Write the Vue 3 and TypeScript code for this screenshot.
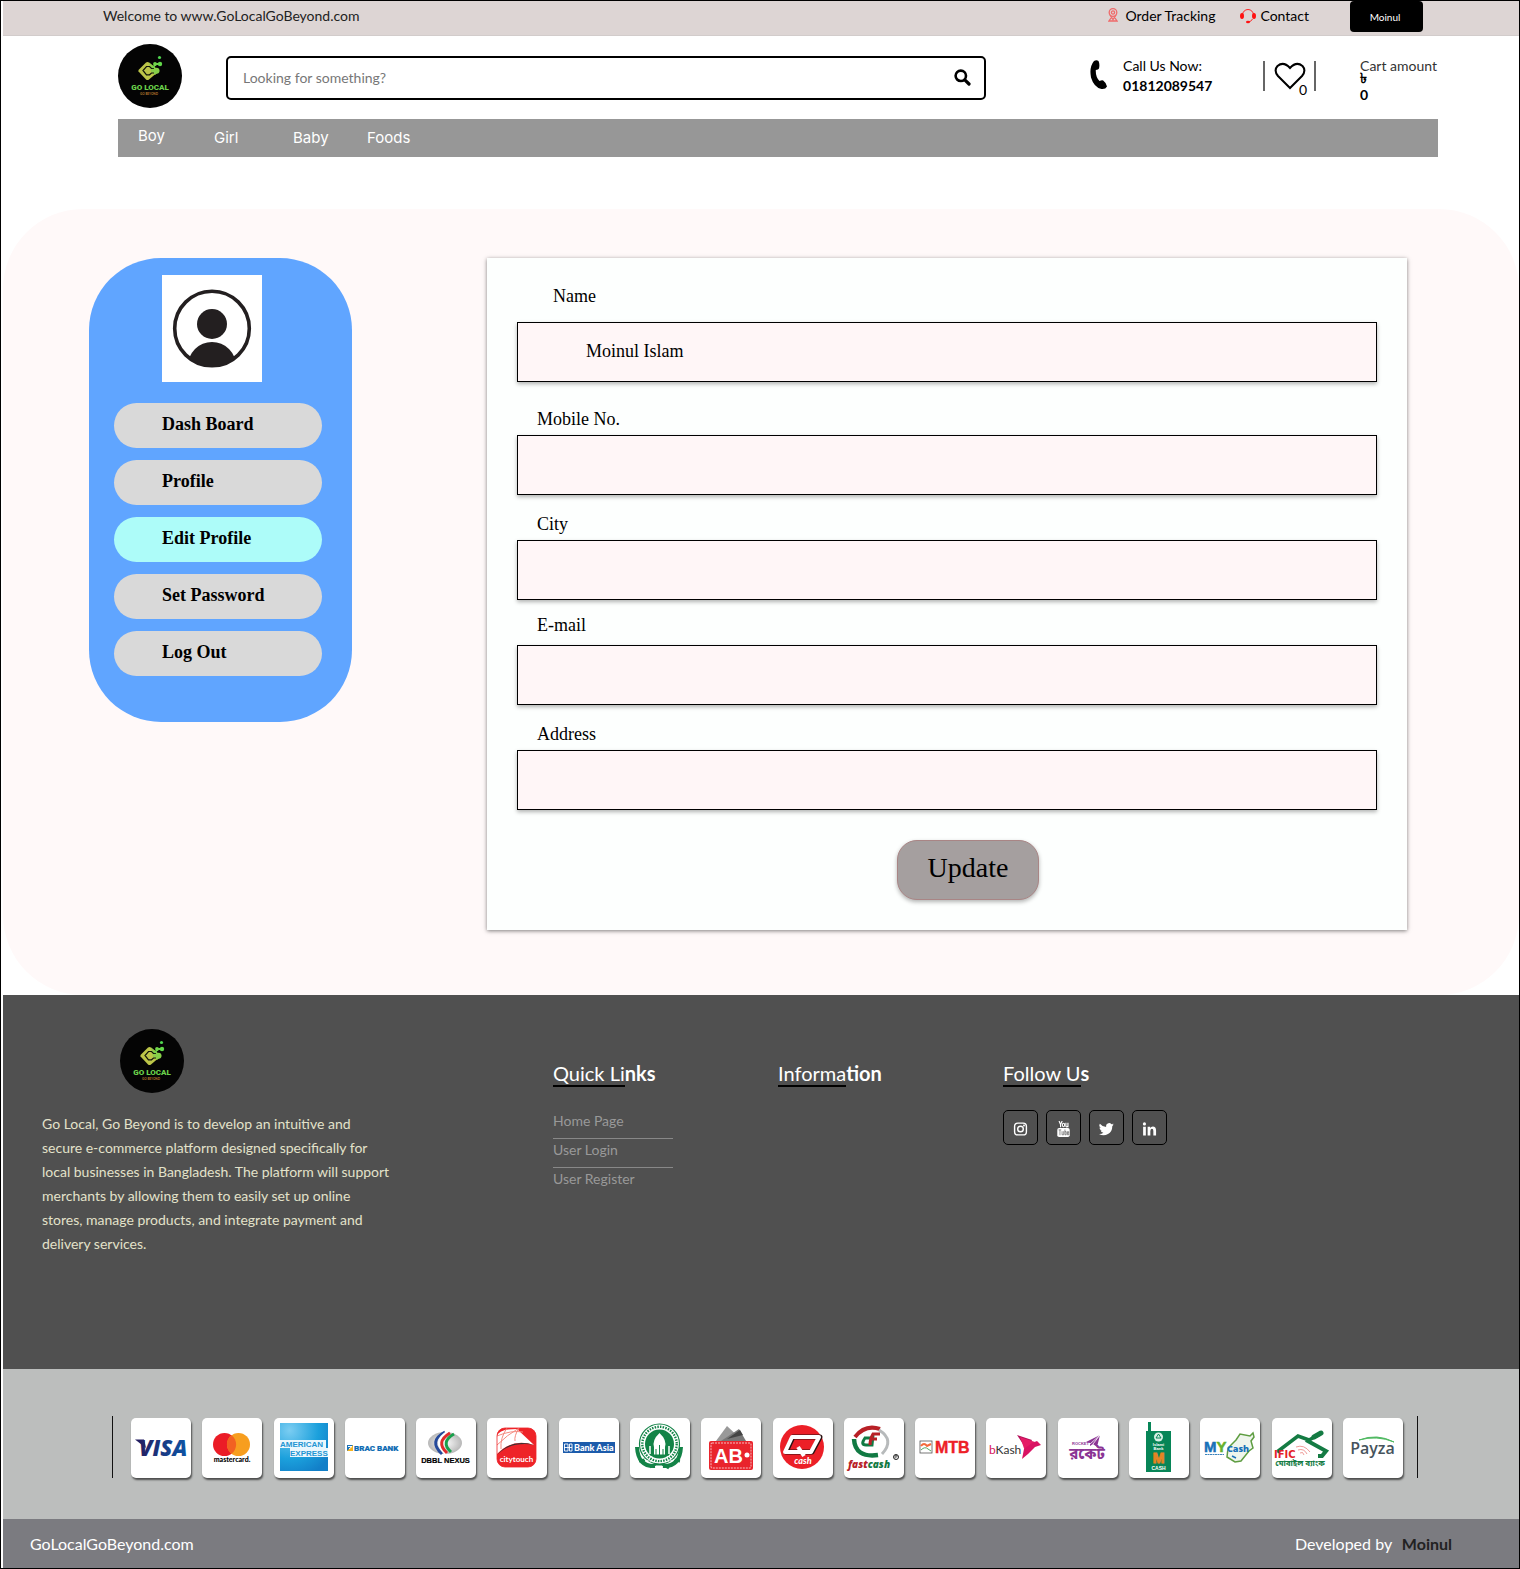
<script setup lang="ts">
import { reactive } from 'vue'

interface Field {
  id: string
  label: string
  type: string
  variant?: string
}

const categories: string[] = ['Boy', 'Girl', 'Baby', 'Foods']
const menu: string[] = ['Dash Board', 'Profile', 'Edit Profile', 'Set Password', 'Log Out']
const active = 'Edit Profile'

const fields: Field[] = [
  { id: 'name', label: 'Name', type: 'text', variant: 'lead' },
  { id: 'mobile', label: 'Mobile No.', type: 'tel' },
  { id: 'city', label: 'City', type: 'text' },
  { id: 'email', label: 'E-mail', type: 'email', variant: 'raised' },
  { id: 'address', label: 'Address', type: 'text' },
]

const values = reactive<Record<string, string>>({
  name: 'Moinul Islam',
  mobile: '',
  city: '',
  email: '',
  address: '',
})

const quickLinks: string[] = ['Home Page', 'User Login', 'User Register']
</script>

<template>
  <div class="page">
    <svg class="defs" width="0" height="0" aria-hidden="true">
      <defs>
        <linearGradient id="leaf" x1="0" y1="1" x2="1" y2="0">
          <stop offset="0" stop-color="#dcb83e" />
          <stop offset="1" stop-color="#62d84a" />
        </linearGradient>
        <symbol id="brand" viewBox="0 0 64 64">
          <circle cx="32" cy="32" r="32" fill="#040404" />
          <path d="M20.500 27.500 Q20 26.500 21 25.500 L28 18.500 Q29.500 17.500 31 18.500 L34 21 L41 27 L31 35.500 Q29.500 36.500 28 35.500 Z" fill="#bcc548" />
          <path d="M31 18.500 L41.500 27 L37 31 L33 28Z" fill="#8fcb49" />
          <path d="M36 24.500 L33.500 24.500 L31.500 22.500 H28.500 L25 26.500 L28.500 30.800 H31.500 L33.500 29 H36" fill="none" stroke="#10140a" stroke-width="1.200" />
          <circle cx="38.500" cy="26.800" r="3" fill="#86cf48" />
          <path d="M34.500 24 L38 20 H42" fill="none" stroke="#70d549" stroke-width="1.800" />
          <circle cx="37" cy="20" r="1.900" fill="#70d549" />
          <circle cx="42" cy="20" r="2.200" fill="#62d84a" />
          <circle cx="41.500" cy="13.500" r="1.600" fill="#4fd64f" />
          <text x="32" y="46" text-anchor="middle" font-family="Roboto, sans-serif" font-weight="900" font-size="8" fill="#6ad24b">GO LOCAL</text>
          <text x="31" y="51" text-anchor="middle" font-family="Lato, sans-serif" font-weight="700" font-size="3" fill="#b97a2c">GO BEYOND</text>
        </symbol>
      </defs>
    </svg>

    <div class="topbar">
      <span class="welcome">Welcome to www.GoLocalGoBeyond.com</span>
      <a href="#" class="toplink tracking">
        <svg width="10" height="14" viewBox="0 0 10 14" fill="none" stroke="#ef6a6a" stroke-width="1.300">
          <circle cx="5" cy="4.500" r="3.800" /><circle cx="5" cy="4.500" r="1.600" />
          <path d="M2 7 L5 11.500 L8 7 M3 10 L1 13 H9 L7 10" />
        </svg>
        Order Tracking
      </a>
      <a href="#" class="toplink contact">
        <svg width="16" height="16" viewBox="0 0 16 16">
          <path d="M2.500 7 A5.500 5.500 0 0 1 13.500 7 M12.500 11 Q11 14 8 14" fill="none" stroke="#f22" />
          <ellipse cx="2" cy="8" rx="2" ry="3" fill="#f11" /><ellipse cx="14" cy="8" rx="2" ry="3" fill="#f11" />
          <ellipse cx="8" cy="14" rx="2" ry="1.200" fill="#f11" />
        </svg>
        Contact
      </a>
      <button type="button" class="account">Moinul</button>
    </div>

    <header class="header">
      <a href="#" class="logo" aria-label="Go Local home"><svg width="64" height="64"><use href="#brand" /></svg></a>
      <form class="search" role="search" @submit.prevent>
        <input type="search" aria-label="Search" placeholder="Looking for something?" />
        <button type="submit" aria-label="Search">
          <svg width="17" height="17" viewBox="0 0 17 17" fill="none" stroke="#000">
            <circle cx="6.800" cy="6.800" r="5.200" stroke-width="2.600" />
            <path d="M10.800 10.800 L15 15" stroke-width="3.200" stroke-linecap="round" />
          </svg>
        </button>
      </form>
      <div class="call">
        <svg width="18" height="30" viewBox="0 0 18 30">
          <path d="M4 1 Q6.500 -0.500 8.500 1 Q10 4 9 8.500 Q8.500 9.500 5.800 10 Q5.500 17 9.500 21 Q12 19.800 13.200 20.500 Q16.500 23 17 26.500 Q15.500 29.500 11.500 29 Q4 27.500 1 17.500 Q-1 7 4 1Z" />
        </svg>
        <p>Call Us Now:<br /><strong>01812089547</strong></p>
      </div>
      <a href="#" class="wish" aria-label="Wishlist">
        <svg width="32" height="28" viewBox="0 0 32 28" fill="none" stroke="#000" stroke-width="2">
          <path d="M16 26 L4 14 Q-0.500 8.500 3.500 4 Q9.500 -1 16 6 Q22.500 -1 28.500 4 Q32.500 8.500 28 14Z" />
        </svg>
        <span class="count">0</span>
      </a>
      <div class="cart">
        <span class="cart-label">Cart amount</span>
        <strong>৳</strong>
        <strong>0</strong>
      </div>
    </header>

    <nav class="categories" aria-label="Categories">
      <a v-for="item in categories" :key="item" href="#" :class="item.toLowerCase()">{{ item }}</a>
    </nav>

    <main class="main">
      <aside class="sidebar">
        <svg class="avatar" viewBox="0 0 100 107" role="img" aria-label="User avatar">
          <rect width="100" height="107" fill="#fff" />
          <clipPath id="disc"><circle cx="50" cy="53.500" r="38" /></clipPath>
          <circle cx="50" cy="53.500" r="37.300" fill="none" stroke="#231f20" stroke-width="3.600" />
          <circle cx="50" cy="49" r="15" fill="#231f20" />
          <ellipse cx="50" cy="91" rx="24" ry="24" fill="#231f20" clip-path="url(#disc)" />
        </svg>
        <nav class="menu" aria-label="Account">
          <a v-for="item in menu" :key="item" href="#" :class="{ active: item === active }">{{ item }}</a>
        </nav>
      </aside>

      <form class="card" @submit.prevent>
        <div v-for="field in fields" :key="field.id" class="field" :class="field.variant">
          <label :for="field.id">{{ field.label }}</label>
          <input :id="field.id" v-model="values[field.id]" :type="field.type" />
        </div>
        <button type="submit" class="update">Update</button>
      </form>
    </main>

    <footer>
      <div class="info">
        <div class="about">
          <svg width="64" height="64"><use href="#brand" /></svg>
          <p>Go Local, Go Beyond is to develop an intuitive and secure e-commerce platform designed specifically for local businesses in Bangladesh. The platform will support merchants by allowing them to easily set up online stores, manage products, and integrate payment and delivery services.</p>
        </div>
        <section class="column">
          <h2><span>Quick Li</span>nks</h2>
          <ul class="links">
            <li v-for="link in quickLinks" :key="link"><a href="#">{{ link }}</a></li>
          </ul>
        </section>
        <section class="column">
          <h2><span>Informa</span>tion</h2>
        </section>
        <section class="column">
          <h2><span>Follow U</span>s</h2>
          <div class="social">
            <a href="#" aria-label="Instagram">
              <svg viewBox="0 0 16 16" fill="none" stroke="#fff" stroke-width="1.500"><rect x="1.700" y="1.700" width="12.600" height="12.600" rx="3.500" /><circle cx="8" cy="8" r="3" /><circle cx="11.700" cy="4.300" r=".4" /></svg>
            </a>
            <a href="#" aria-label="YouTube">
              <svg viewBox="0 0 16 18" fill="#fff">
                <path d="M3 0 L4.700 4 V7 M6.500 0 L4.700 4" fill="none" stroke="#fff" stroke-width="1.300" />
                <ellipse cx="8" cy="4.500" rx="1.300" ry="2" fill="none" stroke="#fff" stroke-width="1.200" />
                <path d="M10.700 2 V6 Q11.500 7 13 6 M13 2 V7" fill="none" stroke="#fff" stroke-width="1.300" />
                <rect x="1" y="8" width="14" height="10" rx="2" />
                <path d="M2.500 10 H5.500 M4 10 V16 M6.400 11.500 V15.500 H8.200 V11.500 M9.600 9.500 V15.500 H11 V12 H9.600 M13.800 14 V15.500 H12.400 V12 H13.800 V13.600 H12.400" fill="none" stroke="#505050" stroke-width=".7" />
              </svg>
            </a>
            <a href="#" aria-label="Twitter">
              <svg viewBox="0 0 24 24" fill="#fff"><path d="M23.600 4.900a9.600 9.600 0 0 1-2.800.8 4.900 4.900 0 0 0 2.200-2.700 9.800 9.800 0 0 1-3.100 1.200 4.900 4.900 0 0 0-8.400 4.500A14 14 0 0 1 1.400 3.500a4.900 4.900 0 0 0 1.500 6.600 4.900 4.900 0 0 1-2.200-.6 4.900 4.900 0 0 0 3.900 4.900 4.900 4.900 0 0 1-2.200.1 4.900 4.900 0 0 0 4.600 3.400A9.900 9.900 0 0 1 0 19.900a13.900 13.900 0 0 0 21.200-12.500 10 10 0 0 0 2.400-2.500Z" /></svg>
            </a>
            <a href="#" aria-label="LinkedIn">
              <svg viewBox="0 0 16 16" fill="#fff"><circle cx="2.600" cy="2.600" r="1.700" /><path d="M1.200 5.500h2.900V15H1.200ZM6 5.500h2.700v1.300Q9.600 5.200 11.500 5.200q3.500 0 3.500 4.300V15h-2.900v-5q0-2.300-1.500-2.300T8.900 10v5H6Z" /></svg>
            </a>
          </div>
        </section>
      </div>

      <div class="payments">
        <ul>
          <li><svg viewBox="0 0 60 60" role="img" aria-label="Visa">
            <linearGradient id="visa"><stop offset="0" stop-color="#241f62" /><stop offset="1" stop-color="#0d55a6" /></linearGradient>
            <path d="M4 21.500 H13 L15 30Z" fill="#241f62" />
            <text x="8" y="37.500" font-family="Open Sans, sans-serif" font-weight="800" font-style="italic" font-size="22" fill="url(#visa)">VISA</text>
          </svg></li>
          <li><svg viewBox="0 0 60 60" role="img" aria-label="Mastercard">
            <circle cx="22.500" cy="26.500" r="11.500" fill="#eb1c26" /><circle cx="36.500" cy="26.500" r="11.500" fill="#f79e1f" />
            <path d="M29.500 17.300 A11.500 11.500 0 0 1 29.500 35.700 A11.500 11.500 0 0 1 29.500 17.300" fill="#f26122" />
            <text x="30" y="44" text-anchor="middle" font-family="Lato, sans-serif" font-weight="900" font-size="7">mastercard.</text>
          </svg></li>
          <li><svg viewBox="0 0 60 60" role="img" aria-label="American Express">
            <radialGradient id="amex" cx=".2" cy=".15" r="1"><stop offset="0" stop-color="#7bcdf2" /><stop offset=".6" stop-color="#1ba0dc" /><stop offset="1" stop-color="#127fc8" /></radialGradient>
            <rect x="6" y="5" width="48" height="48" fill="url(#amex)" />
            <path d="M6 22 H52 V30 H54 V39 H16 V30 H6Z" fill="#eaf7fd" />
            <g font-family="Liberation Sans, sans-serif" font-weight="700" font-size="8" fill="#2295d3"><text x="6" y="29">AMERICAN</text><text x="16" y="38">EXPRESS</text></g>
          </svg></li>
          <li><svg viewBox="0 0 60 60" role="img" aria-label="BRAC Bank">
            <rect x="2" y="27" width="6" height="6" fill="#f8b41b" /><path d="M2 27 H8 L2 33Z" fill="#1a72b8" /><path d="M3 28.500 L7 28.500 L4 31" stroke="#fff" fill="none" />
            <text x="9" y="32.500" font-family="Roboto, sans-serif" font-weight="900" font-size="8" fill="#0d6bb3" stroke="#0d6bb3" stroke-width=".2">BRAC BANK</text>
          </svg></li>
          <li><svg viewBox="0 0 60 60" role="img" aria-label="DBBL Nexus">
            <radialGradient id="globe"><stop offset="0" stop-color="#fff" /><stop offset="1" stop-color="#b8b8b8" /></radialGradient>
            <ellipse cx="29" cy="25" rx="17" ry="11" fill="url(#globe)" />
            <g fill="none" stroke-width="3"><path d="M29 14 Q12 23 26 36" stroke="#254a9b" /><path d="M32 14 Q16 23 30 36" stroke="#fff" /><path d="M34 15 Q19 24 31 35" stroke="#e02b2b" /><path d="M38 16 Q24 24 35 34" stroke="#18a04b" /></g>
            <text x="29.500" y="45" text-anchor="middle" font-family="Liberation Sans, sans-serif" font-weight="700" font-size="7.500" stroke="#000" stroke-width=".2">DBBL NEXUS</text>
          </svg></li>
          <li><svg viewBox="0 0 60 60" role="img" aria-label="citytouch">
            <clipPath id="tile"><rect x="10" y="10" width="39" height="39" rx="8" /></clipPath>
            <g clip-path="url(#tile)"><rect x="10" y="10" width="39" height="39" fill="#ee2328" /><path d="M10 36 V18 Q12 11 30 11 L47 27 Q25 20 10 36Z" fill="#fff" /><path d="M10 37 Q24 20 48 27 Q23 23 10 37" fill="#333" /><path d="M10 18 Q24 12 36 14 M10 27 Q20 17 32 10 M20 10 Q13 20 14 31 M32 10 Q27 18 28 23" fill="none" stroke="#f48b80" /></g>
            <rect x="10" y="10" width="39" height="39" rx="8" fill="none" stroke="#ee2328" stroke-width=".8" />
            <text x="29.500" y="44" text-anchor="middle" font-family="Lato, sans-serif" font-weight="700" font-size="8" fill="#fff">citytouch</text>
          </svg></li>
          <li><svg viewBox="0 0 60 60" role="img" aria-label="Bank Asia">
            <rect x="4" y="24" width="52" height="11" fill="#1c5bab" /><path d="M5.500 26 H9 V33 H5.500Z M5 29.500 H13 M10.500 26 H13 V33 H10.500Z" fill="none" stroke="#fff" stroke-width=".9" />
            <text x="15" y="33" font-family="Lato, sans-serif" font-weight="900" font-size="9" fill="#fff">Bank Asia</text>
          </svg></li>
          <li><svg viewBox="0 0 60 60" role="img" aria-label="Islami Bank">
            <g fill="none" stroke="#138347"><path d="M7 29 Q8 49 25 48 M51 29 Q50 49 33 48" stroke-width="4" /><path d="M9 43 L15 42 M44 42 L50 43 M20 49 L26 46 L32 46 L39 50" stroke-width="3" /><circle cx="29.500" cy="26" r="20" fill="#fff" stroke-width="1.200" /><circle cx="29.500" cy="26" r="17.200" stroke-dasharray="1.500 1.200" stroke-width="2.400" /></g>
            <circle cx="29.500" cy="26" r="14.500" fill="#138347" />
            <path d="M24 29 Q22 22 29.500 15 Q37 22 35 29 V37 H24Z" fill="#fff" /><path d="M26 37 V31 M29.500 37 V27 M33 37 V31 M20 37 H39" stroke="#138347" /><path d="M20 36 V28 M39 36 V28" stroke="#fff" stroke-width="1.500" />
            <path d="M14 41 Q29 48 45 41" fill="none" stroke="#fff" stroke-width="1" stroke-dasharray="2 1" />
          </svg></li>
          <li><svg viewBox="0 0 60 60" role="img" aria-label="AB Bank wallet">
            <path d="M15 23 L26 8 L42 23Z" fill="#999" /><path d="M20 23 L38 11 L45 23Z" fill="#777" /><path d="M26 21 L39 12 L42 17Z" fill="#444" />
            <rect x="8" y="23" width="44" height="29" rx="2" fill="#e9242c" /><rect x="10" y="25" width="40" height="25" rx="1" fill="none" stroke="#fff" stroke-width=".7" stroke-dasharray="2 1" />
            <text x="13" y="45" font-family="Liberation Sans, sans-serif" font-weight="700" font-size="20" fill="#fff">AB</text><circle cx="46" cy="37" r="2.500" fill="#fff" />
          </svg></li>
          <li><svg viewBox="0 0 60 60" role="img" aria-label="Q Cash">
            <circle cx="29" cy="29" r="22" fill="#ec1f27" /><path d="M20 19 H47 L39 34 H13Z" fill="none" stroke="#2a1111" stroke-width="5" stroke-linejoin="round" /><path d="M19 19 H46 L38 34 H12Z" fill="none" stroke="#fff" stroke-width="4" stroke-linejoin="round" /><path d="M25 29 L31 38" stroke="#fff" stroke-width="4" />
            <text x="30" y="46" text-anchor="middle" font-family="Lato, sans-serif" font-weight="900" font-style="italic" font-size="9" fill="#fff">cash</text>
          </svg></li>
          <li><svg viewBox="0 0 60 60" role="img" aria-label="Fastcash">
            <g fill="none"><path d="M11 19 Q21 6 36 11" stroke="#b82026" stroke-width="4" /><path d="M10 21 Q11 40 34 37" stroke="#117a43" stroke-width="4.500" /><path d="M35 12 Q51 22 38 36" stroke="#b7babb" stroke-width="3" /><path d="M27 20 H21 Q16 27 22 27 H28 L29 17" stroke="#117a43" stroke-width="3" /><path d="M36 16 H29 Q26 21 26 27 M26 21 H33" stroke="#b82026" stroke-width="3" /><circle cx="52" cy="39" r="2.500" stroke="#222" /><path d="M51 40.500 V37.500 H53 V39 H51" stroke="#222" stroke-width=".6" /></g>
            <text x="4" y="50" font-family="Open Sans, sans-serif" font-weight="800" font-style="italic" font-size="10" fill="#b82026">fast<tspan fill="#117a43">cash</tspan></text>
          </svg></li>
          <li><svg viewBox="0 0 60 60" role="img" aria-label="MTB">
            <rect x="5" y="23" width="12" height="12" fill="none" stroke="#555" stroke-width=".8" /><path d="M6 28 Q9 24 12 28 L16 26" fill="none" stroke="#f36a3b" stroke-width="2" /><path d="M6 32 Q10 28 13 31 L16 33" fill="none" stroke="#56a765" />
            <text x="20" y="35" font-family="Liberation Sans, sans-serif" font-weight="700" font-size="16" fill="#ed2027" stroke="#ed2027" stroke-width=".4">MTB</text>
          </svg></li>
          <li><svg viewBox="0 0 60 60" role="img" aria-label="bKash">
            <text x="3" y="36" font-family="Lato, sans-serif" font-size="12" fill="#333"><tspan fill="#d5145b">b</tspan>Kash</text>
            <path d="M31 17 L46 22 L41 32Z" fill="#b5105a" /><path d="M34 19 L49 24 L40 36Z" fill="#e51c67" /><path d="M46 25 L51 23 L55 27 L49 29 L42 36 L36 41 L38 31Z" fill="#d91363" />
          </svg></li>
          <li><svg viewBox="0 0 60 60" role="img" aria-label="Rocket">
            <path d="M28 24 L42 17 L39 29 L35 26 L32 28 V25Z" fill="#8b3494" /><path d="M32 26 L42 17 L35 26" stroke="#fff" stroke-width=".8" fill="none" />
            <text x="14" y="27" font-family="Liberation Sans, sans-serif" font-weight="700" font-size="4" fill="#8b3494">ROCKET</text>
            <text x="29" y="41" text-anchor="middle" font-family="Noto Sans Bengali, Noto Sans, sans-serif" font-weight="700" font-size="15" fill="#8b3494">রকেট</text>
          </svg></li>
          <li><svg viewBox="0 0 60 60" role="img" aria-label="Islami Bank mCash">
            <path d="M19 4 H22 V13 H42 V54 H17 V13 H19Z" fill="#078557" /><circle cx="29.500" cy="19" r="4.500" fill="#d8efe5" /><path d="M27 20 L29.500 16 L32 20 H27" fill="none" stroke="#078557" />
            <g text-anchor="middle" font-family="Liberation Sans, sans-serif" font-weight="700" fill="#fff"><text x="29.500" y="28" font-size="4">Islami</text><text x="29.500" y="32" font-size="4">Bank</text><text x="29.500" y="45" font-size="14" fill="#e78423" stroke="#e78423">M</text><text x="29.500" y="52" font-size="5">CASH</text></g>
          </svg></li>
          <li><svg viewBox="0 0 60 60" role="img" aria-label="MYCash">
            <path d="M36 22 L40 16 L50 18 L53 15 L54 19 L51 23 L53 30 L49 33 L41 43 L35 44 L27 39 L28 30Z" fill="#eef5ec" stroke="#5e9d41" stroke-width="1.500" />
            <text x="4" y="34" font-family="Liberation Sans, sans-serif" font-weight="700" font-size="15" fill="#1971b8" stroke="#1971b8" stroke-width=".5">M<tspan fill="#65b12e" stroke="#65b12e">Y</tspan></text><path d="M5 36.500 H24" stroke="#3c83bb" stroke-width="1.200" stroke-dasharray="2 .5" /><path d="M32 38 L36 40" stroke="#1971b8" stroke-width="1.500" />
            <text x="27" y="34" font-family="Open Sans, sans-serif" font-weight="800" font-size="9" fill="#1971b8">Cash</text>
          </svg></li>
          <li><svg viewBox="0 0 60 60" role="img" aria-label="IFIC Mobile Banking">
            <path d="M5 34 L26 18 L37 22 L48 16" fill="none" stroke="#147b43" stroke-width="3.500" /><path d="M34 22 L54 33 L50 38 H46" fill="none" stroke="#147b43" stroke-width="4" /><path d="M42 19 L49 15" stroke="#147b43" stroke-width="5" stroke-linecap="round" />
            <path d="M24 29 Q32 26 38 34 M26 32 Q32 30 35 36 M28 35 Q31 33 32 37" fill="none" stroke="#eb827d" stroke-width=".8" />
            <text x="2" y="40" font-family="DejaVu Sans, sans-serif" font-weight="700" font-size="10" fill="#e51f2a">IFIC</text>
            <text x="28" y="48" text-anchor="middle" font-family="Noto Sans Bengali, Noto Sans, sans-serif" font-weight="700" font-size="8" fill="#147b43">মোবাইল ব্যাংক</text>
          </svg></li>
          <li><svg viewBox="0 0 60 60" role="img" aria-label="Payza">
            <path d="M16 22 Q34 15 51 24 Q34 17 16 22" fill="#4fb961" stroke="#4fb961" />
            <text x="29.500" y="36" text-anchor="middle" font-family="Open Sans, sans-serif" font-weight="600" font-size="16" fill="#46535c">Payza</text>
          </svg></li>
        </ul>
      </div>

      <div class="legal">
        <span>GoLocalGoBeyond.com</span>
        <span>Developed by <strong>Moinul</strong></span>
      </div>
    </footer>
  </div>
</template>

<style>
body {
  margin: 0;
}
</style>

<style scoped>
.page,
.page * {
  box-sizing: border-box;
}
.page {
  border: 1px solid #000;
  padding-left: 2px;
  background: #fff;
  color: #000;
  font: 14px/20px Lato, sans-serif;
}
.defs {
  position: absolute;
}
a {
  color: inherit;
  text-decoration: none;
}
p,
h2,
ul {
  margin: 0;
  padding: 0;
}
ul {
  list-style: none;
}
button,
input {
  font: inherit;
  color: inherit;
}

.topbar {
  display: flex;
  height: 35px;
  padding: 0 96px 0 100px;
  background: #ddd5d4;
  border-bottom: 1px solid #d2cccb;
  line-height: 30px;
}
.welcome {
  margin-right: auto;
  color: #222;
}
.toplink {
  display: flex;
}
.toplink svg {
  margin-top: 7px;
}
.tracking {
  gap: 7px;
}
.contact {
  gap: 4px;
  margin: 0 41px 0 25px;
}
.account {
  width: 73px;
  height: 31px;
  padding: 0 3px 0 0;
  border: 0;
  border-radius: 4px;
  background: #000;
  color: #fff;
  font-size: 10px;
}

.header {
  display: flex;
  height: 83px;
  padding: 8px 82px 0 115px;
}
.logo {
  height: 64px;
}
.search {
  display: flex;
  flex: 1;
  align-items: center;
  height: 44px;
  margin: 12px 104px 0 44px;
  border: 2px solid #000;
  border-radius: 5px;
}
.search input {
  flex: 1;
  min-width: 0;
  height: 40px;
  padding: 0 15px 2px;
  border: 0;
  background: none;
  appearance: none;
}
.search input::placeholder {
  color: #777;
  opacity: 1;
}
.search button {
  display: flex;
  padding: 0 13px 2px;
  border: 0;
  background: none;
}
.call {
  display: flex;
  gap: 15px;
  width: 173px;
  padding-top: 12px;
}
.call svg {
  margin-top: 4px;
}
.wish {
  position: relative;
  width: 53px;
  height: 30px;
  margin: 17px 44px 0 0;
  padding: 1px 0 0 9px;
  border: solid #666;
  border-width: 0 2px;
}
.count {
  position: absolute;
  right: 7px;
  bottom: -9px;
}
.cart {
  display: flex;
  flex-direction: column;
  padding-top: 17px;
  line-height: 17px;
}
.cart-label {
  height: 8px;
  line-height: 10px;
  color: #333;
}

.categories {
  display: flex;
  height: 38px;
  margin: 0 81px 0 115px;
  padding-left: 20px;
  background: #979797;
  color: #fff;
  font: 15px/38px Inter, sans-serif;
}
.boy {
  width: 76px;
  line-height: 34px;
}
.girl {
  width: 79px;
}
.baby {
  width: 74px;
}

.main {
  display: flex;
  align-items: flex-start;
  margin-top: 52px;
  padding: 49px 112px 65px 86px;
  border-radius: 80px;
  background: #fff9f9;
  font-family: "Liberation Serif", serif;
}
.sidebar {
  width: 263px;
  margin-right: 135px;
  padding: 17px 30px 46px 25px;
  border-radius: 72px;
  background: #60a5ff;
}
.avatar {
  display: block;
  width: 100px;
  height: 107px;
  margin-left: 48px;
}
.menu {
  display: flex;
  flex-direction: column;
  gap: 12px;
  margin-top: 21px;
}
.menu a {
  height: 45px;
  padding-left: 48px;
  border-radius: 23px;
  background: #d9d9d9;
  font-size: 18px;
  font-weight: 700;
  line-height: 43px;
}
.menu .active {
  background: #adfcf9;
}
.card {
  display: flex;
  flex: 1;
  flex-direction: column;
  padding: 26px 30px 30px;
  background: #fdfffe;
  box-shadow: 0 1px 4px rgba(0, 0, 0, 0.5);
  font-size: 18px;
  line-height: 24px;
}
.field {
  display: flex;
  flex-direction: column;
  gap: 4px;
  margin-bottom: 17px;
}
.field label {
  padding-left: 20px;
}
.field input {
  width: 100%;
  height: 60px;
  padding: 0 68px 2px;
  border: 1px solid #000;
  border-radius: 0;
  background: #fff6f7;
  box-shadow: 0 2px 4px rgba(0, 0, 0, 0.3);
}
.lead {
  gap: 14px;
  margin-bottom: 25px;
}
.lead label {
  padding-left: 36px;
}
.raised {
  gap: 8px;
  margin-top: -4px;
}
.update {
  align-self: center;
  width: 142px;
  height: 60px;
  margin: 13px 0 0 42px;
  padding: 0 0 4px;
  border: 1px solid #a98585;
  border-radius: 20px;
  background: #a59f9f;
  box-shadow: 0 2px 4px rgba(0, 0, 0, 0.3);
  font-size: 28px;
}

.info {
  display: flex;
  min-height: 374px;
  padding: 34px 81px 0 39px;
  background: #505050;
}
.about {
  width: 511px;
  color: #e3e2ca;
  line-height: 24px;
}
.about svg {
  display: block;
  margin: 0 0 19px 78px;
}
.about p {
  max-width: 350px;
}
.column {
  width: 225px;
  padding-top: 31px;
}
.column:last-child {
  flex: 1;
}
.column h2 {
  color: #fff;
  font-size: 20px;
  font-weight: 700;
  line-height: 26px;
}
.column h2 span {
  display: inline-block;
  border-bottom: 2px solid #000;
  font-weight: 400;
  line-height: 24px;
}
.links {
  width: 120px;
  margin-top: 22px;
  color: #999;
}
.links li {
  height: 29px;
  line-height: 23px;
}
.links li + li {
  border-top: 1px solid #888;
  line-height: 21px;
}
.social {
  display: flex;
  gap: 8px;
  margin-top: 23px;
}
.social a {
  display: grid;
  place-items: center;
  width: 35px;
  height: 35px;
  padding-top: 3px;
  border: 1px solid #000;
  border-radius: 5px;
}
.social svg {
  width: 15px;
  height: 16px;
}
.payments {
  padding: 47px 101px 41px 109px;
  background: #bcbebd;
}
.payments ul {
  display: flex;
  justify-content: space-between;
  padding: 2px 14px 0 18px;
  border: solid #111;
  border-width: 0 1px;
}
.payments li {
  width: 60px;
  height: 60px;
  border-radius: 5px;
  background: #fff;
  box-shadow: 1px 2px 2px rgba(0, 0, 0, 0.6);
}
.payments svg {
  display: block;
}
.legal {
  display: flex;
  justify-content: space-between;
  padding: 0 67px 0 27px;
  background: #7b7b80;
  color: #fff;
  font-size: 16px;
  line-height: 49px;
}
.legal strong {
  margin-left: 6px;
  color: #222;
}
</style>
